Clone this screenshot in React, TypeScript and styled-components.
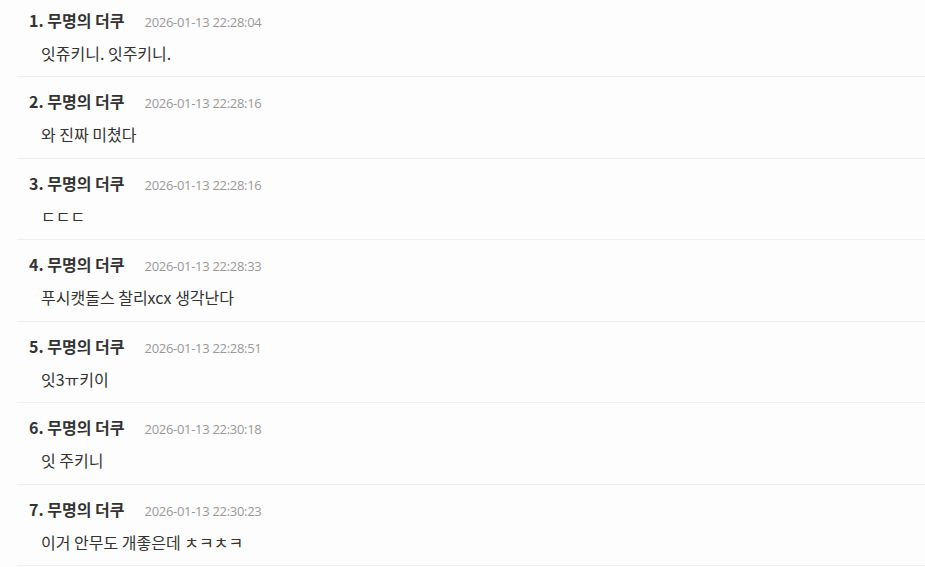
import styled, { createGlobalStyle } from "styled-components";

const GlobalStyle = createGlobalStyle`
  html, body {
    margin: 0;
    padding: 0;
    background: #fdfdfd;
    overflow: hidden;
  }
  body {
    font-family: "Noto Sans", "Noto Sans CJK KR", sans-serif;
    color: #333;
  }
`;

const CommentList = styled.ul`
  list-style: none;
  margin: -4.5px 0 0 17px;
  padding: 0;
`;

const CommentItem = styled.li`
  padding: 14px 0 12.5px 12px;
  border-bottom: 1px solid #efefef;
`;

const CommentHeader = styled.div`
  display: flex;
  align-items: baseline;
  gap: 20px;
  height: 20px;
  line-height: 20px;
`;

const Author = styled.span`
  font-family: "Noto Sans CJK KR", sans-serif;
  font-size: 16px;
  font-weight: 700;
  color: #333;
`;

const Timestamp = styled.span`
  font-family: "Open Sans", "Noto Sans", sans-serif;
  font-size: 13px;
  color: #999;
  letter-spacing: -0.3px;
`;

const CommentBody = styled.p`
  margin: 12px 0 0 12px;
  height: 22px;
  line-height: 22px;
  font-family: "Noto Sans CJK KR", sans-serif;
  font-size: 16px;
  color: #333;
`;

const comments = [
  { time: "2026-01-13 22:28:04", text: "잇쥬키니. 잇주키니." },
  { time: "2026-01-13 22:28:16", text: "와 진짜 미쳤다" },
  { time: "2026-01-13 22:28:16", text: "ㄷㄷㄷ" },
  { time: "2026-01-13 22:28:33", text: "푸시캣돌스 찰리xcx 생각난다" },
  { time: "2026-01-13 22:28:51", text: "잇3ㅠ키이" },
  { time: "2026-01-13 22:30:18", text: "잇 주키니" },
  { time: "2026-01-13 22:30:23", text: "이거 안무도 개좋은데 ㅊㅋㅊㅋ" },
];

export default function App() {
  return (
    <>
      <GlobalStyle />
      <CommentList>
        {comments.map((comment, index) => (
          <CommentItem key={index}>
            <CommentHeader>
              <Author>
                {index + 1}. 무명의 더쿠
              </Author>
              <Timestamp>{comment.time}</Timestamp>
            </CommentHeader>
            <CommentBody>{comment.text}</CommentBody>
          </CommentItem>
        ))}
      </CommentList>
    </>
  );
}
